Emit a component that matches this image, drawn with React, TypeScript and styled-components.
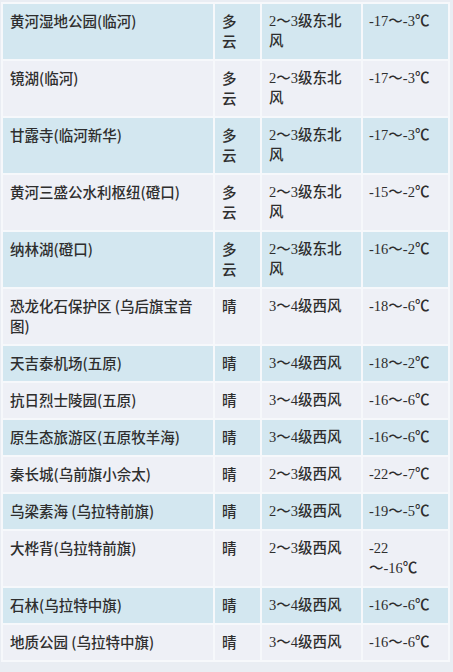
import React from "react";
import styled, { createGlobalStyle } from "styled-components";

const GlobalStyle = createGlobalStyle`
  html, body {
    margin: 0;
    padding: 0;
    background: #e9edf3;
  }
  body {
    font-family: "Noto Sans CJK SC", "Noto Sans", sans-serif;
  }
`;

const Wrapper = styled.div`
  width: 453px;
  height: 672px;
  padding: 2px 1px;
  box-sizing: border-box;
  background: #e9edf3;
  overflow: hidden;
`;

const Table = styled.table`
  table-layout: fixed;
  border-collapse: separate;
  border-spacing: 2px;
  background: #f6f8fb;
  width: 449px;
`;

const Col = styled.col<{ $w: number }>`
  width: ${(p) => p.$w}px;
`;

const Row = styled.tr<{ $shade: boolean }>`
  background: ${(p) => (p.$shade ? "#d3e7f0" : "#eef0f6")};
`;

type Kind = "place" | "sky" | "wind" | "temp";

const padRight: Record<Kind, number> = { place: 15, sky: 14, wind: 12, temp: 14 };

const Cell = styled.td<{ $kind: Kind }>`
  vertical-align: top;
  color: #2e2e2e;
  font-size: 14.5px;
  font-weight: 500;
  line-height: 20px;
  padding-top: 7px;
  padding-bottom: 8px;
  padding-left: ${(p) => (p.$kind === "temp" ? 6 : 7)}px;
  padding-right: ${(p) => padRight[p.$kind]}px;
  font-family: ${(p) =>
    p.$kind === "wind" || p.$kind === "temp"
      ? `"Liberation Serif", "Noto Sans CJK SC", serif`
      : `"Noto Sans CJK SC", "Noto Sans", sans-serif`};
`;

type Item = { place: string; sky: string; wind: string; temp: string };

const rows: Item[] = [
  { place: "黄河湿地公园(临河)", sky: "多云", wind: "2～3级东北风", temp: "-17～-3℃" },
  { place: "镜湖(临河)", sky: "多云", wind: "2～3级东北风", temp: "-17～-3℃" },
  { place: "甘露寺(临河新华)", sky: "多云", wind: "2～3级东北风", temp: "-17～-3℃" },
  { place: "黄河三盛公水利枢纽(磴口)", sky: "多云", wind: "2～3级东北风", temp: "-15～-2℃" },
  { place: "纳林湖(磴口)", sky: "多云", wind: "2～3级东北风", temp: "-16～-2℃" },
  { place: "恐龙化石保护区 (乌后旗宝音图)", sky: "晴", wind: "3～4级西风", temp: "-18～-6℃" },
  { place: "天吉泰机场(五原)", sky: "晴", wind: "3～4级西风", temp: "-18～-2℃" },
  { place: "抗日烈士陵园(五原)", sky: "晴", wind: "3～4级西风", temp: "-16～-6℃" },
  { place: "原生态旅游区(五原牧羊海)", sky: "晴", wind: "3～4级西风", temp: "-16～-6℃" },
  { place: "秦长城(乌前旗小佘太)", sky: "晴", wind: "2～3级西风", temp: "-22～-7℃" },
  { place: "乌梁素海 (乌拉特前旗)", sky: "晴", wind: "2～3级西风", temp: "-19～-5℃" },
  { place: "大桦背(乌拉特前旗)", sky: "晴", wind: "2～3级西风", temp: "-22～-16℃" },
  { place: "石林(乌拉特中旗)", sky: "晴", wind: "3～4级西风", temp: "-16～-6℃" },
  { place: "地质公园 (乌拉特中旗)", sky: "晴", wind: "3～4级西风", temp: "-16～-6℃" },
];

export default function App() {
  return (
    <Wrapper>
      <GlobalStyle />
      <Table>
        <colgroup>
          <Col $w={210} />
          <Col $w={45} />
          <Col $w={99} />
          <Col $w={85} />
        </colgroup>
        <tbody>
          {rows.map((r, i) => (
            <Row key={i} $shade={i % 2 === 0}>
              <Cell $kind="place">{r.place}</Cell>
              <Cell $kind="sky">{r.sky}</Cell>
              <Cell $kind="wind">{r.wind}</Cell>
              <Cell $kind="temp">{r.temp}</Cell>
            </Row>
          ))}
        </tbody>
      </Table>
    </Wrapper>
  );
}
